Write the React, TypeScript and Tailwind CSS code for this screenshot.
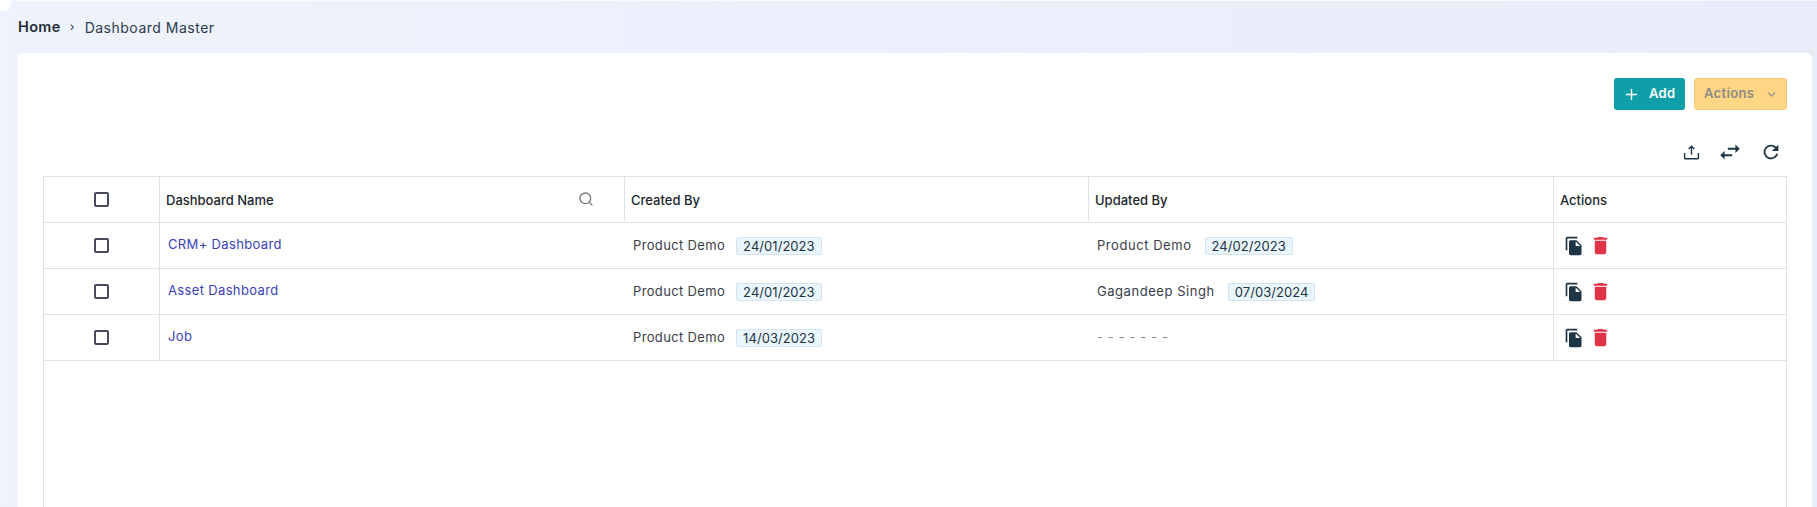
import { ChevronDown, Plus, Search } from 'lucide-react';
import { MdDelete, MdFileCopy, MdRefresh, MdSwapHoriz } from 'react-icons/md';

const rows = [
  { name: 'CRM+ Dashboard', created: '24/01/2023', updatedBy: 'Product Demo', updated: '24/02/2023' },
  { name: 'Asset Dashboard', created: '24/01/2023', updatedBy: 'Gagandeep Singh', updated: '07/03/2024' },
  { name: 'Job', created: '14/03/2023', updatedBy: '', updated: '' },
];

const cols = 'grid grid-cols-[116px_465px_464px_465px_1fr]';
const poppins = 'font-["Inter",sans-serif] tracking-[0.35px]';

const Checkbox = () => (
  <span className="block h-[15px] w-[15px] rounded-[2px] border-2 border-[#454a5c] bg-white" />
);

const DateTag = ({ value }: { value: string }) => (
  <span className="ml-[11px] rounded-[2px] border border-[#d5e4ee] bg-[#eaf6fd] px-[6px] text-[13px] leading-[16px] tracking-[0.05px] text-[#24323d]">
    {value}
  </span>
);

const UploadIcon = () => (
  <svg width="17" height="17" viewBox="0 0 18 18" fill="none" stroke="#1d3545" strokeWidth="1.5">
    <path d="M9 11.5V2.5M6 5.2 9 2.3l3 2.9" />
    <path d="M1.7 9.5v5.4c0 .5.3.8.8.8h13c.5 0 .8-.3.8-.8V9.5" />
  </svg>
);

const App = () => {
  return (
    <div className={`flex h-screen flex-col overflow-hidden border-t border-[#fafbff] bg-gradient-to-r from-[#eff3fe] to-[#e8ecf8] pl-[18px] pr-[5px] ${poppins}`}>
      <div className="fixed top-0 left-0 h-[11px] w-[11px] rounded-br-[8px] bg-white" />

      {/* Breadcrumb */}
      <div className="flex h-[52px] shrink-0 items-center text-[14px] text-[#2d3b48]">
        <span className="text-[14.5px] font-semibold text-[#1f2d3a]">Home</span>
        <span className="ml-[9px] text-[12px]">›</span>
        <span className="ml-[10px] tracking-[0.5px]">Dashboard Master</span>
      </div>

      {/* Card */}
      <div className="flex min-h-0 flex-1 flex-col rounded-t-[5px] bg-white pt-[25px] pl-[25px] pr-[25px]">
        <div className="flex justify-end gap-[9px]">
          <button className="flex h-[32px] w-[71px] items-center rounded-[3px] bg-[#0f9fa8] pl-[9px] text-[13px] font-semibold text-white">
            <Plus size={17} strokeWidth={2} />
            <span className="ml-[9px]">Add</span>
          </button>
          <button className="flex h-[32px] w-[93px] items-center rounded-[3px] border border-[#fbc67c] bg-[#ffd684] pl-[9px] text-[13px] font-semibold text-[#8d8b86]">
            Actions
            <ChevronDown size={13} className="ml-[11px]" />
          </button>
        </div>

        <div className="mt-[32px] mb-[14px] flex h-[20px] items-center justify-end gap-[17px] pr-[5px]">
          <UploadIcon />
          <MdSwapHoriz size={26} color="#1d3545" />
          <MdRefresh size={22} color="#1d3545" />
        </div>

        {/* Table */}
        <div className="flex min-h-0 flex-1 flex-col border-x border-t border-[#dfe0e8] text-[13px]">
          <div className={`${cols} h-[46px] shrink-0 border-b border-[#dfe0e8] text-[13px] font-[550] tracking-normal text-[#20262d]`}>
            <div className="flex items-center justify-center border-r border-[#dfe0e8] pr-[1px]">
              <Checkbox />
            </div>
            <div className="flex items-center justify-between border-r border-[#dfe0e8] pt-[2px] pr-[30px] pl-[6px]">
              Dashboard Name
              <Search size={16} color="#77797c" className="-mt-[3px]" />
            </div>
            <div className="flex items-center border-r border-[#dfe0e8] pt-[2px] pl-[6px]">Created By</div>
            <div className="flex items-center border-r border-[#dfe0e8] pt-[2px] pl-[6px]">Updated By</div>
            <div className="flex items-center pt-[2px] pl-[6px]">Actions</div>
          </div>

          {rows.map((row) => (
            <div key={row.name} className={`${cols} h-[46px] shrink-0 border-b border-[#dfe0e8] text-[#3a3d4c]`}>
              <div className="flex items-center justify-center border-r border-[#dfe0e8]">
                <Checkbox />
              </div>
              <div className="flex items-center pb-[2px] pl-[8px] text-[#3b3fb8]">{row.name}</div>
              <div className="flex items-center pl-[8px]">
                Product Demo
                <DateTag value={row.created} />
              </div>
              <div className="flex items-center border-r border-[#dfe0e8] pl-[8px]">
                {row.updatedBy ? (
                  <>
                    <span className="mr-[2px] tracking-[0.55px]">{row.updatedBy}</span>
                    <DateTag value={row.updated} />
                  </>
                ) : (
                  <span className="tracking-[0.6px] text-[#8a8a8a]">- - - - - - -</span>
                )}
              </div>
              <div className="flex items-center gap-[5px] pl-[10px]">
                <MdFileCopy size={20} color="#1d3545" />
                <MdDelete size={23} color="#e03347" />
              </div>
            </div>
          ))}
        </div>
      </div>
    </div>
  );
};

export default App;
